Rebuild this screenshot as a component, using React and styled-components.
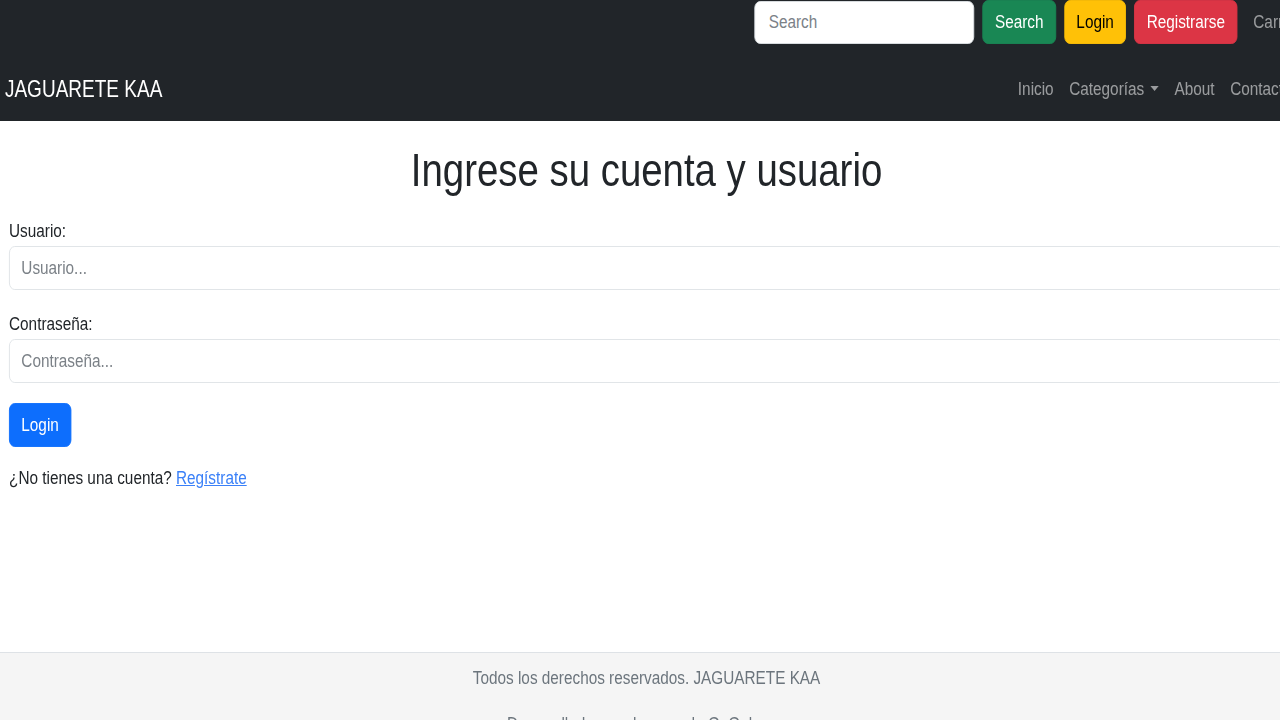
import React from "react";
import styled, { createGlobalStyle } from "styled-components";

// The reference is a horizontally squeezed capture: every text is ~82% of
// its natural width. The page is laid out at natural size and squeezed once.
const SQUEEZE = 0.82;

const GlobalStyle = createGlobalStyle`
  * {
    box-sizing: border-box;
  }

  html, body {
    margin: 0;
    padding: 0;
    overflow: hidden;
    background: #fff;
  }

  body {
    font-family: "Liberation Sans", Arial, sans-serif;
    font-size: 18.7px;
    line-height: 1.5;
    color: #212529;
  }
`;

const App = () => {
  return (
    <Viewport>
      <GlobalStyle />
      <Page>
        <Navbar>
          <TopRow>
            <SearchInput type="search" placeholder="Search" />
            <Btn $variant="success">Search</Btn>
            <Btn $variant="warning">Login</Btn>
            <Btn $variant="danger">Registrarse</Btn>
            <NavLink href="#carrito">Carrito</NavLink>
          </TopRow>
          <MainRow>
            <Brand href="#">JAGUARETE KAA</Brand>
            <NavLinks>
              <NavLink href="#inicio">Inicio</NavLink>
              <NavLink href="#categorias">
                Categorías <Caret />
              </NavLink>
              <NavLink href="#about">About</NavLink>
              <NavLink href="#contacto">Contacto</NavLink>
            </NavLinks>
          </MainRow>
        </Navbar>

        <Main>
          <Title>Ingrese su cuenta y usuario</Title>
          <Form onSubmit={(e) => e.preventDefault()}>
            <Field>
              <Label htmlFor="usuario">Usuario:</Label>
              <Input id="usuario" type="text" placeholder="Usuario..." />
            </Field>
            <Field>
              <Label htmlFor="password">Contraseña:</Label>
              <Input id="password" type="password" placeholder="Contraseña..." />
            </Field>
            <Btn $variant="primary" type="submit">
              Login
            </Btn>
          </Form>
          <Hint>
            ¿No tienes una cuenta? <TextLink href="#registro">Regístrate</TextLink>
          </Hint>
        </Main>

        <Footer>
          <FooterText>Todos los derechos reservados. JAGUARETE KAA</FooterText>
          <FooterText>Desarrollado por alumnos de G. Galeano</FooterText>
        </Footer>
      </Page>
    </Viewport>
  );
};

export default App;

const Viewport = styled.div`
  width: 1280px;
  height: 720px;
  overflow: hidden;
`;

const Page = styled.div`
  display: flex;
  flex-direction: column;
  width: 1600px;
  height: 720px;
  transform: scaleX(${SQUEEZE});
  transform-origin: 0 0;
`;

const Navbar = styled.nav`
  background-color: #212529;
  height: 121px;
  flex-shrink: 0;
  display: flex;
  flex-direction: column;
`;

const TopRow = styled.div`
  display: flex;
  justify-content: flex-end;
  align-items: center;
  gap: 10px;
  height: 44px;
  padding-right: 6px;
`;

const MainRow = styled.div`
  flex: 1;
  display: flex;
  justify-content: space-between;
  align-items: center;
  padding: 13px 15.5px 0 6px;
`;

const Brand = styled.a`
  color: #fff;
  font-size: 23.2px;
  text-decoration: none;
  white-space: nowrap;
`;

const NavLinks = styled.div`
  display: flex;
  align-items: center;
`;

const NavLink = styled.a`
  display: inline-flex;
  align-items: center;
  color: rgba(255, 255, 255, 0.55);
  text-decoration: none;
  padding: 0 9.5px;
  white-space: nowrap;
`;

const Caret = styled.span`
  display: inline-block;
  margin-left: 8px;
  border-top: 5px solid rgba(255, 255, 255, 0.55);
  border-left: 5px solid transparent;
  border-right: 5px solid transparent;
`;

const SearchInput = styled.input`
  width: 268px;
  height: 43px;
  padding: 0 16px;
  font: inherit;
  color: #212529;
  background: #fff;
  border: 1px solid #dee2e6;
  border-radius: 7px;
  outline: none;

  &::placeholder {
    color: #7b8187;
  }
`;

const variants = {
  success: { bg: "#198754", color: "#fff" },
  warning: { bg: "#ffc107", color: "#000" },
  danger: { bg: "#dc3545", color: "#fff" },
  primary: { bg: "#0d6efd", color: "#fff" },
};

const Btn = styled.button`
  height: 44px;
  padding: 0 14px;
  font: inherit;
  background-color: ${({ $variant }) => variants[$variant].bg};
  color: ${({ $variant }) => variants[$variant].color};
  border: 1px solid ${({ $variant }) => variants[$variant].bg};
  border-radius: 7px;
  cursor: pointer;
  white-space: nowrap;
`;

const Main = styled.main`
  min-height: 531px;
  flex-shrink: 0;
  width: 1577px;
  padding: 21px 11px 0;
`;

const Title = styled.h1`
  margin: 0 0 19px;
  text-align: center;
  font-size: 46.8px;
  font-weight: 500;
  line-height: 1.2;
  color: #212529;
`;

const Form = styled.form`
  display: flex;
  flex-direction: column;
  align-items: flex-start;
`;

const Field = styled.div`
  width: 100%;
  display: flex;
  flex-direction: column;
  margin-bottom: 20px;
`;

const Label = styled.label`
  line-height: 28px;
  color: #212529;
  margin-bottom: 1px;
`;

const Input = styled.input`
  width: 100%;
  height: 44px;
  padding: 0 14px;
  font: inherit;
  color: #212529;
  border: 1px solid #dee2e6;
  border-radius: 7px;
  outline: none;

  &::placeholder {
    color: #7b8187;
  }
`;

const Hint = styled.p`
  margin: 17px 0 0;
  line-height: 28px;
`;

const TextLink = styled.a`
  color: #3a80f8;
  text-decoration: underline;
`;

const Footer = styled.footer`
  flex: 1;
  width: 1577px;
  background-color: #f5f5f5;
  border-top: 1px solid #dee2e6;
  padding-top: 11px;
  text-align: center;
`;

const FooterText = styled.p`
  margin: 0 0 18px;
  line-height: 28px;
  color: #6c757d;
`;
